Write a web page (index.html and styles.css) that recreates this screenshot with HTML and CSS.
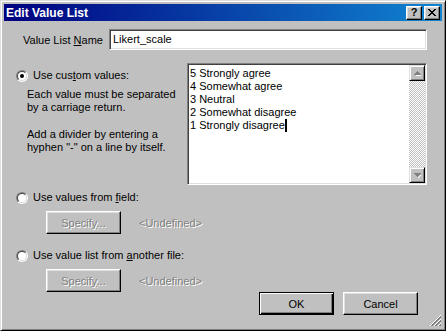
FILE: index.html
```html
<!DOCTYPE html>
<html lang="en">
<head>
  <meta charset="UTF-8">
  <title>Edit Value List</title>
  <link rel="stylesheet" href="styles.css">
</head>
<body>
<div class="window">
  <div class="titlebar">
    <span class="title">Edit Value List</span>
    <div class="title-buttons">
      <button class="tbtn help">?</button>
      <button class="tbtn">
        <svg width="8" height="7" viewBox="0 0 8 7">
          <path d="M0 0h2v1h1v1h2v-1h1v-1h2v1h-1v1h-1v1h-1v1h1v1h1v1h1v1h-2v-1h-1v-1h-2v1h-1v1h-2v-1h1v-1h1v-1h1v-1h-1v-1h-1v-1h-1z" fill="#000"/>
        </svg>
      </button>
    </div>
  </div>

  <div class="content">
    <div class="name-row">
      <label class="name-label">Value List <u>N</u>ame</label>
      <div class="field">Likert_scale</div>
    </div>

    <div class="custom-row">
      <div class="custom-left">
        <div class="option"><span class="radio checked"></span><span>Use cus<u>t</u>om values:</span></div>
        <p class="hint">Each value must be separated<br>by a carriage return.</p>
        <p class="hint second">Add a divider by entering a<br>hyphen "-" on a line by itself.</p>
      </div>
      <div class="values">
        <div class="values-text">5 Strongly agree<br>4 Somewhat agree<br>3 Neutral<br>2 Somewhat disagree<br>1 Strongly disagree<span class="caret"></span></div>
        <div class="scrollbar">
          <div class="sbtn">
            <svg width="7" height="5" viewBox="0 0 7 5"><path d="M3 1h1v1h1v1h1v1h-5v-1h1v-1h1z" fill="#fff" transform="translate(1 1)"/><path d="M3 0h1v1h1v1h1v1h1v1h-7v-1h1v-1h1v-1h1z" fill="#808080"/></svg>
          </div>
          <div class="track"></div>
          <div class="sbtn">
            <svg width="7" height="5" viewBox="0 0 7 5"><path d="M0 0h7v1h-1v1h-1v1h-1v1h-1v-1h-1v-1h-1v-1h-1z" fill="#808080"/><path d="M4 4h1v-1h1v-1h1v1h-1v1h-1v1h-1z" fill="#fff"/></svg>
          </div>
        </div>
      </div>
    </div>

    <div class="option indent"><span class="radio"></span><span>Use values from <u>f</u>ield:</span></div>
    <div class="specify-row first">
      <button class="btn disabled">Specif<u>y</u>...</button>
      <span class="undefined">&lt;Undefined&gt;</span>
    </div>

    <div class="option indent third"><span class="radio"></span><span>Use value list from <u>a</u>nother file:</span></div>
    <div class="specify-row">
      <button class="btn disabled">Specif<u>y</u>...</button>
      <span class="undefined">&lt;Undefined&gt;</span>
    </div>

    <div class="actions">
      <button class="btn default">OK</button>
      <button class="btn">Cancel</button>
    </div>

    <div class="grip-row">
      <svg width="12" height="12" viewBox="0 0 12 12">
        <path d="M11 0L0 11M11 4L4 11M11 8L8 11" stroke="#fff" stroke-width="1"/>
        <path d="M11 1L1 11M11 2L2 11M11 5L5 11M11 6L6 11M11 9L9 11M11 10L10 11" stroke="#808080" stroke-width="1"/>
      </svg>
    </div>
  </div>
</div>
</body>
</html>
```

FILE: styles.css
```css
body {
  margin: 0;
  background-color: #c0c0c0;
  font-family: "Liberation Sans", Arial, sans-serif;
  font-size: 11px;
  color: #000;
}

.window {
  width: 446px;
  height: 331px;
  box-sizing: border-box;
  padding: 3px;
  background-color: #c0c0c0;
  border: 1px solid;
  border-color: #dfdfdf #000 #000 #dfdfdf;
  box-shadow: inset 1px 1px #fff, inset -1px -1px #808080;
  display: flex;
  flex-direction: column;
}

/* Заголовок вікна */
.titlebar {
  height: 18px;
  display: flex;
  align-items: center;
  justify-content: space-between;
  background: linear-gradient(to right, #000080, #1084d0);
  padding: 0 2px 0 2px;
}

.title {
  color: #fff;
  font-weight: bold;
  font-size: 12px;
}

.title-buttons {
  display: flex;
  gap: 2px;
}

.tbtn {
  width: 16px;
  height: 14px;
  padding: 0;
  box-sizing: border-box;
  background-color: #c0c0c0;
  border: 1px solid;
  border-color: #fff #000 #000 #fff;
  box-shadow: inset -1px -1px #808080, inset 1px 1px #dfdfdf;
  display: flex;
  align-items: center;
  justify-content: center;
  font-family: "Liberation Sans", Arial, sans-serif;
  font-weight: bold;
  font-size: 11px;
  line-height: 1;
}

.help {
  padding-bottom: 1px;
}

.content {
  flex: 1;
  display: flex;
  flex-direction: column;
}

.name-row {
  display: flex;
  align-items: center;
  margin-top: 8px;
}

.name-label {
  width: 86px;
  margin-left: 19px;
}

.field {
  width: 318px;
  height: 21px;
  box-sizing: border-box;
  background-color: #fff;
  border: 1px solid;
  border-color: #808080 #fff #fff #808080;
  box-shadow: inset 1px 1px #404040, inset -1px -1px #dfdfdf;
  padding: 0 3px;
  line-height: 19px;
}

.custom-row {
  display: flex;
  margin-top: 13px;
}

.custom-left {
  width: 171px;
  padding: 6px 0 0 12px;
}

.option {
  display: flex;
  align-items: center;
  gap: 5px;
  height: 13px;
  line-height: 13px;
  white-space: nowrap;
}

.option.indent {
  margin: 6px 0 0 12px;
}

.option.third {
  margin-top: 15px;
}

.radio {
  position: relative;
  width: 12px;
  height: 12px;
  flex: none;
  box-sizing: border-box;
  border-radius: 50%;
  border: 1px solid;
  border-color: #808080 #fff #fff #808080;
}

.radio::before {
  content: "";
  position: absolute;
  inset: 0;
  border-radius: 50%;
  border: 1px solid;
  border-color: #404040 #dfdfdf #dfdfdf #404040;
  background-color: #fff;
}

.radio.checked::after {
  content: "";
  position: absolute;
  left: 3px;
  top: 3px;
  width: 4px;
  height: 4px;
  border-radius: 50%;
  background-color: #000;
}

.hint {
  margin: 6px 0 0 11px;
  line-height: 13px;
  white-space: nowrap;
}

.hint.second {
  margin-top: 14px;
}

.values {
  width: 240px;
  height: 122px;
  box-sizing: border-box;
  background-color: #fff;
  border: 1px solid;
  border-color: #808080 #fff #fff #808080;
  box-shadow: inset 1px 1px #404040, inset -1px -1px #dfdfdf;
  padding: 1px;
  display: flex;
}

.values-text {
  flex: 1;
  padding: 2px 0 0 1px;
  line-height: 13px;
}

.caret {
  display: inline-block;
  width: 2px;
  height: 13px;
  background-color: #000;
  vertical-align: top;
}

.scrollbar {
  width: 16px;
  display: flex;
  flex-direction: column;
}

.sbtn {
  height: 16px;
  box-sizing: border-box;
  background-color: #c0c0c0;
  border: 1px solid;
  border-color: #dfdfdf #000 #000 #dfdfdf;
  box-shadow: inset 1px 1px #fff, inset -1px -1px #808080;
  display: flex;
  align-items: center;
  justify-content: center;
}

.track {
  flex: 1;
  background-color: #fff;
  background-image: conic-gradient(#c0c0c0 25%, #fff 0 50%, #c0c0c0 0 75%, #fff 0);
  background-size: 2px 2px;
}

.specify-row {
  display: flex;
  align-items: center;
  gap: 18px;
  margin: 7px 0 0 42px;
}

.btn {
  width: 75px;
  height: 23px;
  padding: 0;
  box-sizing: border-box;
  background-color: #c0c0c0;
  border: 1px solid;
  border-color: #fff #000 #000 #fff;
  box-shadow: inset -1px -1px #808080, inset 1px 1px #dfdfdf;
  font-family: "Liberation Sans", Arial, sans-serif;
  font-size: 11px;
  color: #000;
}

.btn.default {
  border-color: #000;
  box-shadow: inset 1px 1px #fff, inset -1px -1px #000, inset -2px -2px #808080;
}

.btn.disabled,
.undefined {
  color: #808080;
  text-shadow: 1px 1px #fff;
}

.actions {
  display: flex;
  justify-content: flex-end;
  gap: 9px;
  padding-right: 24px;
}

.grip-row {
  flex: 1;
  display: flex;
  justify-content: flex-end;
  align-items: flex-end;
}
```
